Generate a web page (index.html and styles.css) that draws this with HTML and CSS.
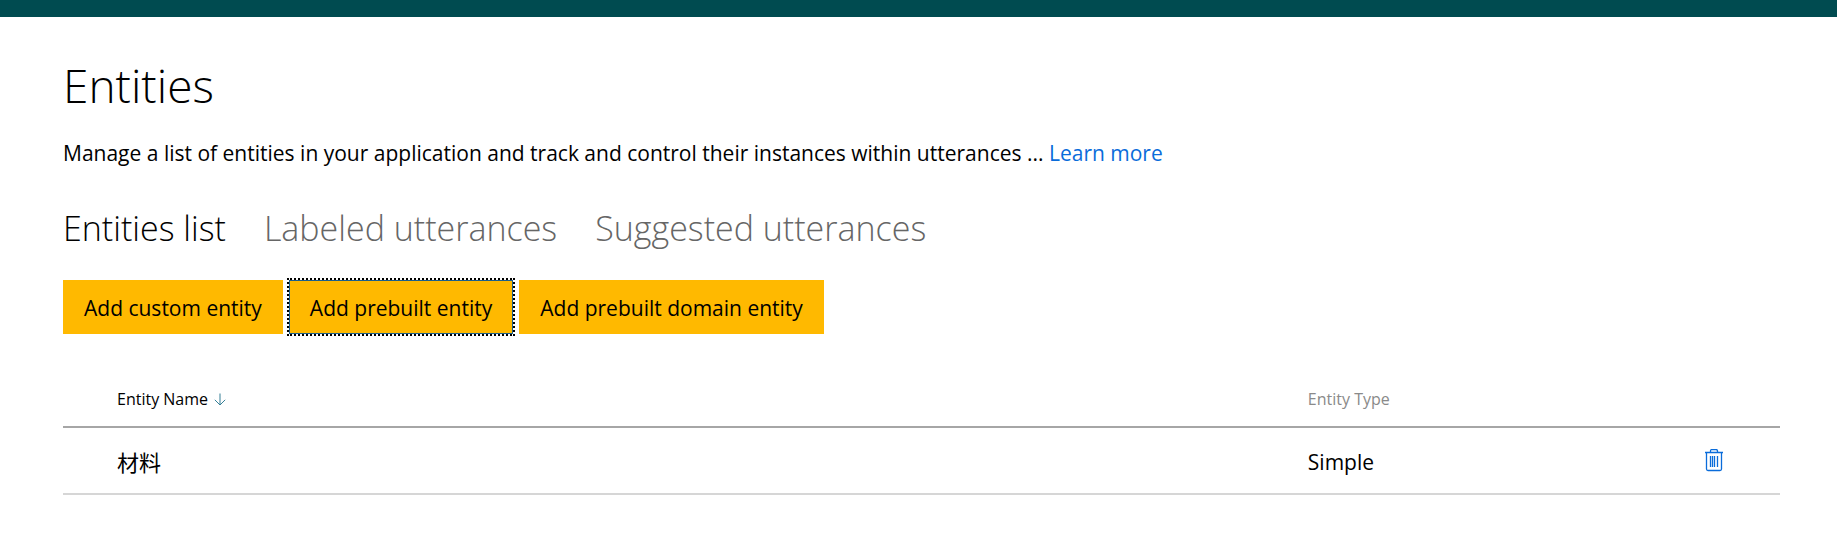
FILE: index.html
```html
<!DOCTYPE html>
<html lang="en">
<head>
<meta charset="utf-8">
<title>Entities</title>
<link rel="stylesheet" href="styles.css">
</head>
<body>
<header class="topbar"></header>
<main class="page">
  <h1 class="title">Entities</h1>
  <p class="intro">Manage a list of entities in your application and track and control their instances within utterances ... <a class="link" href="#">Learn more</a></p>
  <nav class="tabs">
    <a class="tab tab-active" href="#" aria-current="page">Entities list</a>
    <a class="tab" href="#">Labeled utterances</a>
    <a class="tab" href="#">Suggested utterances</a>
  </nav>
  <div class="actions">
    <button class="button" type="button">Add custom entity</button>
    <button class="button button-focused" type="button">Add prebuilt entity</button>
    <button class="button" type="button">Add prebuilt domain entity</button>
  </div>
  <table class="entities">
    <thead>
      <tr>
        <th class="col-name" scope="col" aria-sort="ascending"><span class="sort">Entity Name
          <svg class="arrow" viewBox="0 0 12 14" width="12" height="14" aria-hidden="true"><path d="M6 1.500V13M0.800 7.800L6 13L11.200 7.800"/></svg></span></th>
        <th class="col-type" scope="col">Entity Type</th>
        <th class="col-action"></th>
      </tr>
    </thead>
    <tbody>
      <tr>
        <td class="name">材料</td>
        <td>Simple</td>
        <td><button class="delete" type="button" aria-label="Delete entity">
          <svg class="trash" viewBox="0 0 18 24" width="18" height="24" aria-hidden="true"><path d="M0 3.500H18M5.500 3.500V2Q5.500 0.500 7 0.500H11Q12.500 0.500 12.500 2V3.500M1.500 3.500V20Q1.500 21.500 3 21.500H15Q16.500 21.500 16.500 20V3.500M5.500 7V18M7.500 7V18M9.500 7V18M12.500 7V18"/></svg>
        </button></td>
      </tr>
    </tbody>
  </table>
</main>
</body>
</html>
```
FILE: styles.css
```css
* { box-sizing: border-box; }
body {
  margin: 0;
  background: #fff;
  color: #000;
  font: 21px/30px "Open Sans", "Noto Sans CJK SC", sans-serif;
}
.topbar { height: 17px; background: #004b50; }
.page { padding: 34px 57px 0 63px; }
.title { margin: 0; font-size: 46px; line-height: 68px; font-weight: 300; }
.intro { margin: 19px 0 0; }
.link { color: #0a6cda; text-decoration: none; }
.tabs { display: flex; gap: 38px; margin-top: 36px; }
.tab {
  color: #666;
  font-size: 34px;
  line-height: 48px;
  font-weight: 300;
  text-decoration: none;
}
.tab-active { color: #000; }
.actions { display: flex; gap: 6px; margin-top: 28px; }
.button {
  height: 54px;
  padding: 2px 21px 0;
  border: 0;
  background: #ffb900;
  color: #000;
  font: inherit;
}
.button-focused {
  border: 1px solid #1c5f8c;
  padding: 2px 20px 0;
  outline: 2px dotted #000;
}
.entities {
  width: 100%;
  margin-top: 28px;
  border-collapse: collapse;
  table-layout: fixed;
}
.entities th, .entities td { padding: 0; text-align: left; }
.entities tr > :first-child { padding-left: 54px; }
.entities th {
  height: 65px;
  padding-top: 10px;
  border-bottom: 2px solid #a6a6a6;
  color: #8a8a8a;
  font-size: 16px;
  line-height: 22px;
  font-weight: 400;
}
.entities td { height: 67px; padding-top: 2px; border-bottom: 2px solid #d6d6d6; }
.entities .col-name { width: 72.5%; color: #000; }
.col-action { width: 75px; }
.name { font-size: 22px; }
.sort { display: inline-flex; align-items: center; gap: 6px; }
.arrow { fill: none; stroke: #357f96; }
.delete { display: block; padding: 0 0 2px; border: 0; background: none; }
.trash { display: block; fill: none; stroke: #0a6cda; stroke-width: 1.3; }
```
